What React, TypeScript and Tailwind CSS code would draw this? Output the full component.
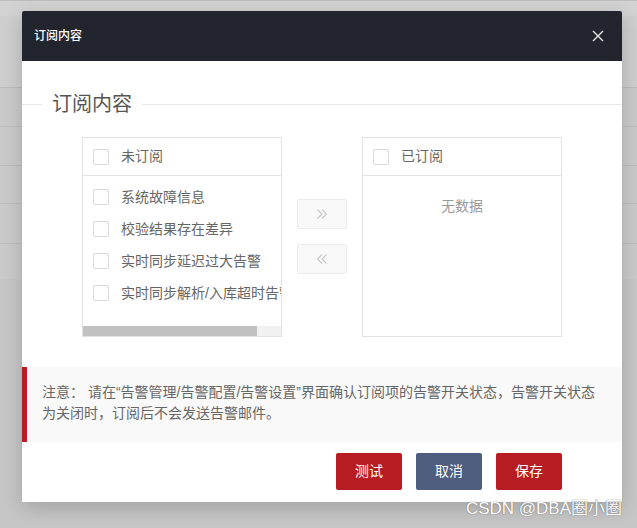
import React from "react";

const font = { fontFamily: '"Liberation Sans", "Noto Sans CJK SC", sans-serif' };

const unsubscribed = ["系统故障信息", "校验结果存在差异", "实时同步延迟过大告警", "实时同步解析/入库超时告警"];

function Box() {
  return <span className="w-4 h-4 shrink-0 rounded-[2px] border border-[#d9d9d9] bg-white" />;
}

function Chevrons({ dir }: { dir: "right" | "left" }) {
  const d = dir === "right" ? "M3.5 3.5l4.5 4.5-4.5 4.5M8 3.5l4.5 4.5L8 12.5" : "M12.5 3.5L8 8l4.5 4.5M8 3.5L3.5 8 8 12.5";
  return (
    <svg width="16" height="16" viewBox="0 0 16 16" fill="none" stroke="#c8c8c8" strokeWidth="1.1">
      <path d={d} />
    </svg>
  );
}

export default function App() {
  return (
    <div className="relative w-[637px] h-[528px] overflow-hidden bg-[#c6c6c6]" style={font}>
      {/* faded page behind the mask */}
      <div className="flex flex-col">
        <div className="h-[16px] bg-[#d2d2d2] border-t border-[#bdbdbd]" />
        <div className="h-[72px] bg-[#cecece] border-b border-[#bcbcbc]" />
        <div className="h-[39px] bg-[#cacaca] border-b border-[#bcbcbc]" />
        <div className="h-[39px] bg-[#cacaca] border-b border-[#bcbcbc]" />
        <div className="h-[38px] bg-[#cacaca] border-b border-[#bcbcbc]" />
        <div className="h-[40px] bg-[#cacaca] border-b border-[#bcbcbc]" />
        <div className="h-[35px] bg-[#cacaca]" />
      </div>

      {/* dialog */}
      <div className="absolute left-[22px] top-[11px] w-[600px] bg-white shadow-[0_6px_20px_rgba(0,0,0,0.18)] rounded-t-[2px]">
        <div className="h-[50px] bg-[#22252e] flex items-center justify-between pl-3 pr-[18px] rounded-t-[2px]">
          <span className="text-[12px] text-white font-medium">订阅内容</span>
          <svg width="12" height="12" viewBox="0 0 12 12" stroke="#e6e6e6" strokeWidth="1.4">
            <path d="M1 1l10 10M11 1L1 11" />
          </svg>
        </div>

        <div className="pt-[31px]">
          <div className="flex items-center h-[24px]">
            <div className="w-5 h-px bg-[#e8e8e8]" />
            <span className="px-2.5 text-[20px] leading-[24px] text-[#555]">订阅内容</span>
            <div className="flex-1 h-px bg-[#e8e8e8]" />
          </div>

          <div className="flex pl-[60px] mt-[21px] gap-[15px]">
            <div className="w-[200px] h-[200px] border border-[#e3e3e3] flex flex-col">
              <div className="h-[38px] border-b border-[#e3e3e3] flex items-center pl-[10px] gap-3 text-[14px] text-[#666]">
                <Box />
                <span>未订阅</span>
              </div>
              <div className="flex-1 pt-[5px] overflow-hidden">
                {unsubscribed.map((t) => (
                  <div key={t} className="h-8 flex items-center pl-[10px] gap-3 text-[14px] text-[#666] whitespace-nowrap">
                    <Box />
                    <span>{t}</span>
                  </div>
                ))}
              </div>
              <div className="h-[10px] bg-[#f1f1f1]">
                <div className="h-full w-[174px] bg-[#c1c1c1]" />
              </div>
            </div>

            <div className="flex flex-col gap-[15px] pt-[62px]">
              <div className="w-[50px] h-[30px] bg-[#f9f9f9] border border-[#ececec] rounded-[2px] flex items-center justify-center">
                <Chevrons dir="right" />
              </div>
              <div className="w-[50px] h-[30px] bg-[#f9f9f9] border border-[#ececec] rounded-[2px] flex items-center justify-center">
                <Chevrons dir="left" />
              </div>
            </div>

            <div className="w-[200px] h-[200px] border border-[#e3e3e3] flex flex-col">
              <div className="h-[38px] border-b border-[#e3e3e3] flex items-center pl-[10px] gap-3 text-[14px] text-[#666]">
                <Box />
                <span>已订阅</span>
              </div>
              <div className="pt-[21px] text-center text-[14px] leading-[18px] text-[#999]">无数据</div>
            </div>
          </div>

          <div className="mt-[30px] h-[75px] bg-[#f9f9f9] border-l-[5px] border-[#b81c24] pl-[15px] pr-[24px] pt-[15px] text-[14px] leading-[21px] text-[#666]">
            注意： 请在“告警管理/告警配置/告警设置”界面确认订阅项的告警开关状态，告警开关状态为关闭时，订阅后不会发送告警邮件。
          </div>

          <div className="flex justify-end gap-[14px] pr-[60px] pt-[11px] pb-[12px]">
            <button className="w-[66px] h-[37px] rounded-[2px] bg-[#b71c23] text-white text-[14px]">测试</button>
            <button className="w-[66px] h-[37px] rounded-[2px] bg-[#4f5d7f] text-white text-[14px]">取消</button>
            <button className="w-[66px] h-[37px] rounded-[2px] bg-[#b71c23] text-white text-[14px]">保存</button>
          </div>
        </div>
      </div>

      <div className="absolute right-[15px] top-[499px] text-[17px] leading-[20px] text-white [text-shadow:0_0_1px_#777,0_0_1px_#777]">
        CSDN @DBA圈小圈
      </div>
    </div>
  );
}
